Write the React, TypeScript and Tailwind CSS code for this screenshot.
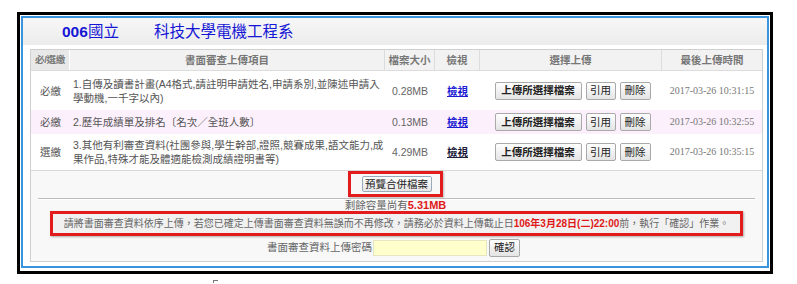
import React from 'react';

interface UploadRow {
    req: string;
    lines: string[];
    size: string;
    time: string;
    height: string;
    pink?: boolean;
    visited?: boolean;
}

const ROWS: UploadRow[] = [
    {
        req: '必繳',
        lines: ['1.自傳及讀書計畫(A4格式,請註明申請姓名,申請系別,並陳述申請入', '學動機,一千字以內)'],
        size: '0.28MB',
        time: '2017-03-26 10:31:15',
        height: 'h-[39px]'
    },
    {
        req: '必繳',
        lines: ['2.歷年成績單及排名〔名次／全班人數〕'],
        size: '0.13MB',
        time: '2017-03-26 10:32:55',
        height: 'h-[24px]',
        pink: true
    },
    {
        req: '選繳',
        lines: ['3.其他有利審查資料(社團參與,學生幹部,證照,競賽成果,語文能力,成', '果作品,特殊才能及體適能檢測成績證明書等)'],
        size: '4.29MB',
        time: '2017-03-26 10:35:15',
        height: 'h-[37px]',
        visited: true
    }
];

const Btn: React.FC<{ children: React.ReactNode; bold?: boolean; className?: string }> = ({ children, bold, className }) => (
    <button
        className={`h-[18px] border border-[#a9a9a9] rounded-[2px] bg-linear-to-b from-white to-[#e4e4e4] text-[#222] text-[10.5px] leading-none ${bold ? 'font-bold' : ''} ${className ?? ''}`}
    >
        {children}
    </button>
);

export default function App() {
    return (
        <div className="w-[797px] h-[284px] bg-white overflow-hidden font-['Liberation_Sans','Noto_Sans_CJK_TC',sans-serif] text-[#666]">
            <div className="ml-[17px] mt-[12px] w-[756px] border-[3px] border-black p-[1px] pb-[3px] bg-white">
                <div className="border-2 border-[#3a93dd] bg-white pb-[4px]">
                    {/* title band */}
                    <div className="h-[27px] bg-linear-to-b from-[#f7f7f7] to-[#ececec] flex items-center pl-[39px] text-[#1616d6] text-[15.5px] leading-none">
                        <span><b>006</b>國立</span>
                        <span className="ml-[35px]">科技大學電機工程系</span>
                    </div>

                    <div className="ml-[7px] mt-[4px] w-[733px] border border-[#cfcfcf] bg-[#f8f8f8]">
                        {/* table header */}
                        <div className="flex h-[21px] bg-[#f2f2f2] border-b border-[#dcdcdc] text-[10.5px] font-bold text-[#777] leading-none">
                            <div className="w-[39px] bg-[#e8e8e8] border-r border-white flex items-center justify-center text-[9.5px] tracking-[-0.3px] whitespace-nowrap">必/選繳</div>
                            <div className="w-[315px] border-r border-[#dcdcdc] flex items-center justify-center">書面審查上傳項目</div>
                            <div className="w-[50px] border-r border-[#dcdcdc] flex items-center justify-center">檔案大小</div>
                            <div className="w-[45px] border-r border-[#dcdcdc] flex items-center justify-center">檢視</div>
                            <div className="w-[182px] border-r border-[#dcdcdc] flex items-center justify-center">選擇上傳</div>
                            <div className="w-[100px] flex items-center justify-center">最後上傳時間</div>
                        </div>

                        {ROWS.map((row, i) => (
                            <div
                                key={i}
                                className={`flex ${row.height} ${row.pink ? 'bg-[#fcf0fc]' : 'bg-white'} ${i === ROWS.length - 1 ? 'border-b border-[#d8d8d8]' : ''} text-[10.5px] leading-[14px]`}
                            >
                                <div className="w-[39px] flex items-center justify-center text-[#555]">{row.req}</div>
                                <div className="w-[315px] pl-[3px] flex flex-col justify-center text-[#555] whitespace-nowrap">
                                    {row.lines.map((l, j) => (
                                        <span key={j}>{l}</span>
                                    ))}
                                </div>
                                <div className="w-[50px] flex items-center justify-center text-[#666]">{row.size}</div>
                                <div className="w-[45px] flex items-center justify-center">
                                    <a className={`font-bold underline ${row.visited ? 'text-[#1b1b3a]' : 'text-[#1a1ad2]'}`}>檢視</a>
                                </div>
                                <div className="w-[182px] flex items-center justify-center gap-[4px] pl-[3px]">
                                    <Btn bold className="w-[87px]">上傳所選擇檔案</Btn>
                                    <Btn className="w-[30px]">引用</Btn>
                                    <Btn className="w-[31px]">刪除</Btn>
                                </div>
                                <div className="w-[100px] flex items-center justify-center font-['Liberation_Serif',serif] text-[10px] text-[#777]">
                                    {row.time}
                                </div>
                            </div>
                        ))}

                        {/* bottom section */}
                        <div className="flex flex-col items-center pb-[5px]">
                            <div className="flex border-[3px] border-[#e21c1c] pl-[11px] pr-[8px] py-[2px] ml-[-3px] shadow-[1px_1px_2px_rgba(0,0,0,0.25)]">
                                <button className="w-[70px] h-[16px] border border-[#9ab] rounded-[2px] bg-linear-to-b from-white to-[#e6e6e6] text-[#222] text-[10.5px] leading-none">
                                    預覽合併檔案
                                </button>
                            </div>
                            <div className="w-[717px] h-[2px] mt-[1px] border-t border-[#bdbdbd] bg-white" />
                            <div className="h-[11px] text-[10.5px] leading-[11px] ml-[-2px]">
                                剩餘容量尚有<span className="text-[#e01818] font-bold text-[11px]">5.31MB</span>
                            </div>
                            <div className="w-[693px] h-[25px] border-[3px] border-[#e21c1c] bg-[#f1f1f1] flex items-center justify-center text-[10px] whitespace-nowrap shadow-[1px_1px_2px_rgba(0,0,0,0.3)]">
                                請將書面審查資料依序上傳，若您已確定上傳書面審查資料無誤而不再修改，請務必於資料上傳截止日
                                <span className="text-[#e01818] font-bold">106年3月28日(二)22:00</span>
                                前，執行「確認」作業。
                            </div>
                            <div className="mt-[3px] flex items-center h-[17px] ml-[-6px]">
                                <span className="text-[10.5px] mr-[1px]">書面審查資料上傳密碼</span>
                                <input className="w-[114px] h-[16px] bg-[#ffffcc] border border-[#e6e6c2] outline-none" />
                                <Btn className="w-[31px] h-[17px] ml-[2px]">確認</Btn>
                            </div>
                        </div>
                    </div>
                </div>
            </div>
            <div className="ml-[213px] mt-[6px] w-[5px] h-[3px] border-l border-t border-[#777]" />
        </div>
    );
}
